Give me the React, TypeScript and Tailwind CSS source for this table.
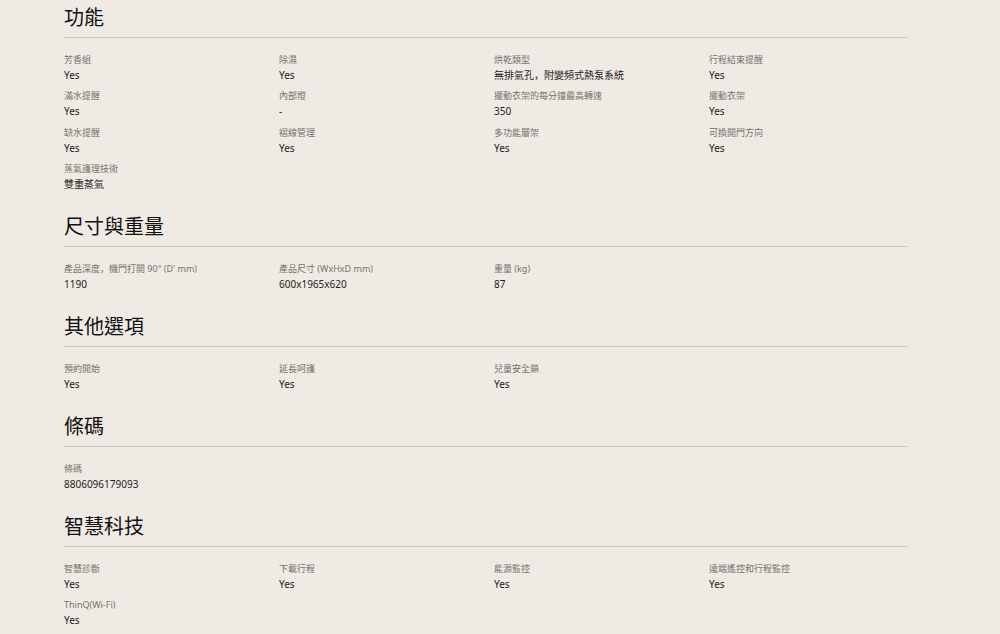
import React from "react";

type Item = { label: string; value: string };
type Section = { title: string; items: Item[] };

const sections: Section[] = [
  {
    title: "功能",
    items: [
      { label: "芳香組", value: "Yes" },
      { label: "除濕", value: "Yes" },
      { label: "烘乾類型", value: "無排氣孔，附變頻式熱泵系統" },
      { label: "行程結束提醒", value: "Yes" },
      { label: "滿水提醒", value: "Yes" },
      { label: "內部燈", value: "-" },
      { label: "擺動衣架的每分鐘最高轉速", value: "350" },
      { label: "擺動衣架", value: "Yes" },
      { label: "缺水提醒", value: "Yes" },
      { label: "褶線管理", value: "Yes" },
      { label: "多功能層架", value: "Yes" },
      { label: "可換開門方向", value: "Yes" },
      { label: "蒸氣護理技術", value: "雙重蒸氣" },
    ],
  },
  {
    title: "尺寸與重量",
    items: [
      { label: "產品深度，機門打開 90° (D' mm)", value: "1190" },
      { label: "產品尺寸 (WxHxD mm)", value: "600x1965x620" },
      { label: "重量 (kg)", value: "87" },
    ],
  },
  {
    title: "其他選項",
    items: [
      { label: "預約開始", value: "Yes" },
      { label: "延長呵護", value: "Yes" },
      { label: "兒童安全鎖", value: "Yes" },
    ],
  },
  {
    title: "條碼",
    items: [{ label: "條碼", value: "8806096179093" }],
  },
  {
    title: "智慧科技",
    items: [
      { label: "智慧診斷", value: "Yes" },
      { label: "下載行程", value: "Yes" },
      { label: "能源監控", value: "Yes" },
      { label: "遠端遙控和行程監控", value: "Yes" },
      { label: "ThinQ(Wi-Fi)", value: "Yes" },
    ],
  },
];

function WithComma({ text }: { text: string }) {
  const parts = text.split("，");
  return (
    <>
      {parts.map((p, i) => (
        <React.Fragment key={i}>
          {i > 0 && (
            <span style={{ fontFamily: '"Noto Sans CJK SC", sans-serif' }}>，</span>
          )}
          {p}
        </React.Fragment>
      ))}
    </>
  );
}

export default function App() {
  return (
    <div
      className="min-h-[634px] w-full bg-[#efebe4] pt-[1px]"
      style={{ fontFamily: '"Noto Sans", "Noto Sans CJK TC", sans-serif' }}
    >
      <div className="ml-16 w-[844px]">
        {sections.map((s) => (
          <section key={s.title} className="mb-[17px]">
            <div className="border-b border-[#cfcac3] pb-[2px]">
              <h2 className="h-[34px] text-[20px] leading-[34px] font-normal text-[#111111]">
                {s.title}
              </h2>
            </div>
            <div className="grid grid-cols-4 gap-x-4 gap-y-[4.33px] pt-[14px]">
              {s.items.map((it, i) => (
                <div key={i} className="flex flex-col">
                  <div className="h-4 text-[9px] leading-4 text-[#75716b] whitespace-nowrap">
                    <WithComma text={it.label} />
                  </div>
                  <div className="h-4 text-[10px] leading-[14px] text-[#222222] font-normal whitespace-nowrap">
                    <WithComma text={it.value} />
                  </div>
                </div>
              ))}
            </div>
          </section>
        ))}
      </div>
    </div>
  );
}
